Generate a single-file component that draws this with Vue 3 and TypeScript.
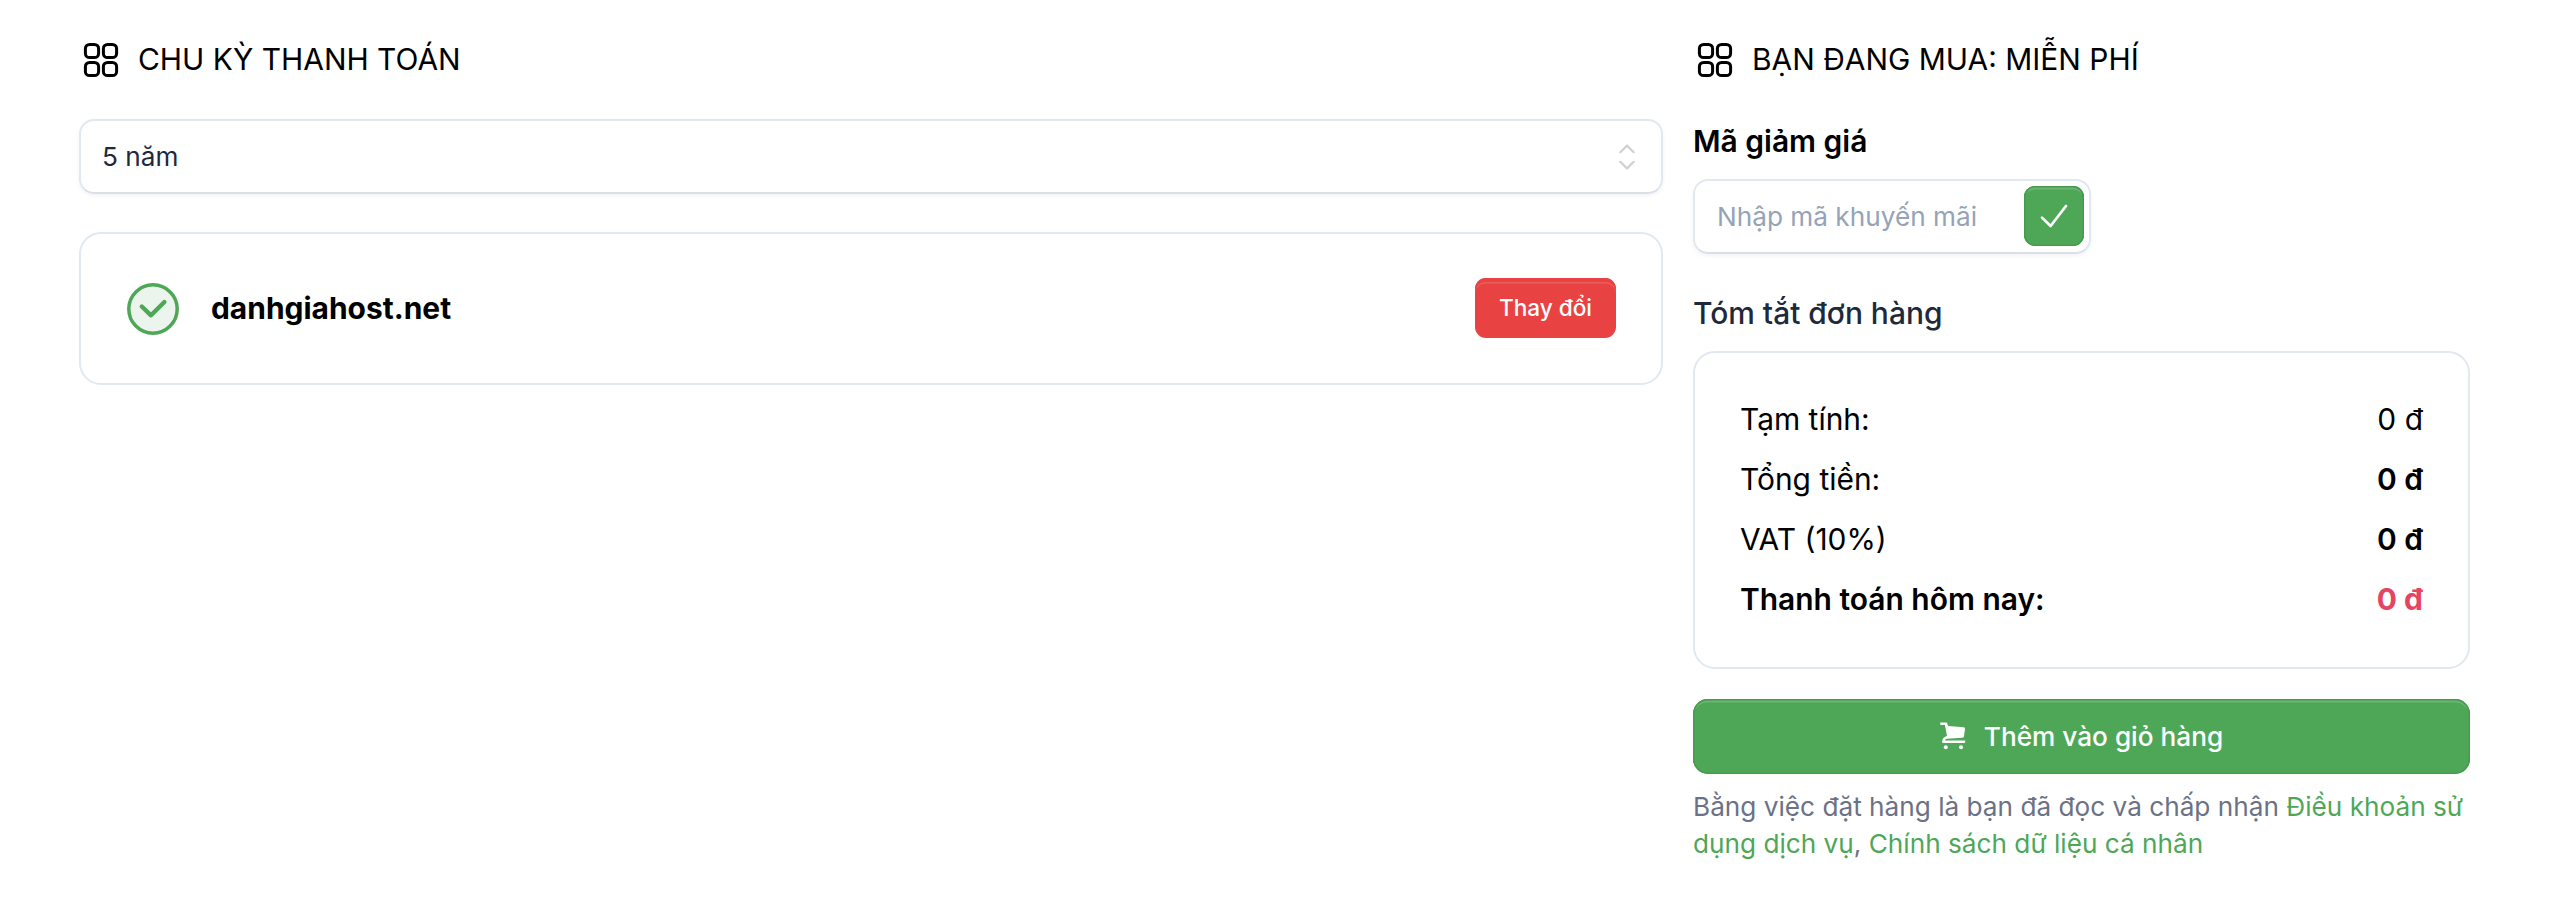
<script setup lang="ts">
interface SummaryRow {
  label: string
  value: string
  labelBold?: boolean
  valueBold?: boolean
  accent?: boolean
}

const rows: SummaryRow[] = [
  { label: 'Tạm tính:', value: '0 đ' },
  { label: 'Tổng tiền:', value: '0 đ', valueBold: true },
  { label: 'VAT (10%)', value: '0 đ', valueBold: true },
  { label: 'Thanh toán hôm nay:', value: '0 đ', labelBold: true, valueBold: true, accent: true },
]
</script>

<template>
  <main class="checkout">
    <section class="cycle">
      <h2 class="heading">
        <svg class="grid-icon" viewBox="0 0 36 36">
          <rect x="2.4" y="2.4" width="13.2" height="13.2" rx="4.2" />
          <rect x="20.4" y="2.4" width="13.2" height="13.2" rx="4.2" />
          <rect x="2.4" y="20.4" width="13.2" height="13.2" rx="4.2" />
          <rect x="20.4" y="20.4" width="13.2" height="13.2" rx="4.2" />
        </svg>
        <span>CHU KỲ THANH TOÁN</span>
      </h2>
      <div class="select">
        <span>5 năm</span>
        <svg class="updown" viewBox="0 0 16 26">
          <path d="M1.3 8.2 8 1.6l6.7 6.6M1.3 17.8 8 24.4l6.7-6.6" />
        </svg>
      </div>
      <div class="domain">
        <svg class="ok" viewBox="0 0 52 52">
          <circle cx="26" cy="26" r="24.2" />
          <path d="M14.8 23.5 24 32.300 37.400 19" />
        </svg>
        <span class="name">danhgiahost.net</span>
        <button class="change">Thay đổi</button>
      </div>
    </section>

    <section class="order">
      <h2 class="heading">
        <svg class="grid-icon" viewBox="0 0 36 36">
          <rect x="2.4" y="2.4" width="13.2" height="13.2" rx="4.2" />
          <rect x="20.4" y="2.4" width="13.2" height="13.2" rx="4.2" />
          <rect x="2.4" y="20.4" width="13.2" height="13.2" rx="4.2" />
          <rect x="20.4" y="20.4" width="13.2" height="13.2" rx="4.2" />
        </svg>
        <span>BẠN ĐANG MUA: MIỄN PHÍ</span>
      </h2>
      <h3 class="label">Mã giảm giá</h3>
      <div class="coupon">
        <span class="placeholder">Nhập mã khuyến mãi</span>
        <button class="apply">
          <svg viewBox="0 0 28 24"><path d="M2 13.6 10.6 22 26 2" /></svg>
        </button>
      </div>
      <h3 class="subtitle">Tóm tắt đơn hàng</h3>
      <div class="summary">
        <div v-for="row in rows" :key="row.label" class="row">
          <span :class="{ bold: row.labelBold }">{{ row.label }}</span>
          <span :class="{ bold: row.valueBold, accent: row.accent }">{{ row.value }}</span>
        </div>
      </div>
      <button class="add">
        <svg class="cart" viewBox="0 0 26 28">
          <path d="M.5.6h5.200c.9 0 1.600.4 1.800 1.300l.6 2 15.600 1.300c.9.1 1.400.8 1.300 1.700l-1 7.300c-.1.9-.8 1.400-1.700 1.500L7 16.700c-1.300.3-1.900 1-2.200 1.900h19.500c.6 0 1 .5 1 1.100s-.4 1.200-1 1.200H2.900c-.6 0-.9-.5-.8-1.100.2-2 1-3.700 2.700-4.700L7 13.700 4.900 2.900H1.200C.7 2.900.3 2.500.2 1.900S.200.6.5.6z" />
          <circle cx="5.800" cy="25.200" r="2" />
          <circle cx="21" cy="25.200" r="2" />
        </svg>
        <span>Thêm vào giỏ hàng</span>
      </button>
      <p class="terms">
        Bằng việc đặt hàng là bạn đã đọc và chấp nhận <a>Điều khoản sử dụng dịch vụ</a>, <a>Chính sách dữ liệu cá nhân</a>
      </p>
    </section>
  </main>
</template>

<style>
body {
  margin: 0;
  background: #fff;
}
</style>

<style scoped>
.checkout {
  display: flex;
  align-items: flex-start;
  gap: 30px;
  box-sizing: border-box;
  width: 2560px;
  height: 906px;
  padding: 30px 90px 0 79px;
  overflow: hidden;
  background: #fff;
  color: #000;
  font-family: Inter, "Liberation Sans", sans-serif;
  font-size: 29.95px;
}

.checkout * {
  box-sizing: border-box;
}

button {
  display: flex;
  align-items: center;
  justify-content: center;
  margin: 0;
  padding: 0;
  border: 0;
  color: #fff;
  font-family: inherit;
  font-weight: 500;
}

h2,
h3,
p {
  margin: 0;
  font-weight: 400;
}

.cycle {
  width: 1584px;
}

.order {
  flex: 1;
  min-width: 0;
}

.heading {
  display: flex;
  align-items: center;
  gap: 19px;
  height: 59px;
  padding-left: 4px;
  font-size: 29.95px;
}

.heading span {
  padding-bottom: 2px;
}

.grid-icon {
  width: 36px;
  height: 36px;
  fill: none;
  stroke: #000;
  stroke-width: 3;
}

.select {
  display: flex;
  align-items: center;
  justify-content: space-between;
  height: 75px;
  margin-top: 30px;
  padding: 0 26px 0 21px;
  border: 2px solid #e2e8f0;
  border-bottom-color: #d9e0ea;
  border-radius: 15px;
  box-shadow: 0 2px 4px rgba(0, 0, 0, 0.05);
  color: #1e293b;
  font-size: 26.2px;
}

.updown {
  width: 16px;
  height: 26px;
  fill: none;
  stroke: #d0d0d0;
  stroke-width: 2.2;
  stroke-linecap: round;
  stroke-linejoin: round;
}

.domain {
  display: flex;
  align-items: center;
  height: 153px;
  margin-top: 38px;
  padding: 0 45px 0 46px;
  border: 2px solid #e2e8f0;
  border-radius: 22px;
}

.ok {
  width: 52px;
  height: 52px;
  fill: #ecf5ed;
  stroke: #4ea757;
  stroke-width: 3.5;
  stroke-linecap: round;
  stroke-linejoin: round;
}

.ok path {
  fill: none;
  stroke-width: 4.4;
}

.name {
  flex: 1;
  margin-left: 32px;
  padding-bottom: 2px;
  font-weight: 700;
}

.change {
  width: 141px;
  height: 60px;
  margin-bottom: 1px;
  padding-bottom: 1px;
  border-radius: 11px;
  background: #e84342;
  box-shadow: inset 0 4px 0 #e84342, inset 0 5.500px 0 rgba(255, 255, 255, 0.14);
  font-size: 22.6px;
}

.label {
  height: 60px;
  margin-top: 22px;
  font-weight: 600;
  font-size: 29.95px;
  line-height: 60px;
}

.coupon {
  display: flex;
  align-items: center;
  justify-content: space-between;
  width: 398px;
  height: 75px;
  margin-top: 8px;
  padding: 0 5px 0 22px;
  border: 2px solid #e2e8f0;
  border-bottom-color: #d9e0ea;
  border-radius: 15px;
  box-shadow: 0 2px 4px rgba(0, 0, 0, 0.05);
  color: #94a3b8;
  font-size: 26.2px;
}

.apply {
  width: 60px;
  height: 60px;
  margin-bottom: 1px;
  border-radius: 11px;
  background: #4ea757;
  box-shadow: inset 0 0 0 1.500px #48994f, inset 0 3.500px 0 #6bb573;
}

.apply svg {
  width: 28px;
  height: 24px;
  fill: none;
  stroke: #fff;
  stroke-width: 2.7;
  stroke-linecap: round;
  stroke-linejoin: round;
}

.subtitle {
  height: 60px;
  margin-top: 29px;
  color: #1e293b;
  font-weight: 500;
  font-size: 29.95px;
  line-height: 60px;
}

.summary {
  height: 318px;
  margin-top: 8px;
  padding: 37px 45px 0;
  border: 2px solid #e2e8f0;
  border-radius: 22px;
}

.row {
  display: flex;
  justify-content: space-between;
  height: 59.9px;
  line-height: 59.9px;
}

.bold {
  font-weight: 600;
}

.accent {
  color: #e64463;
  font-weight: 700;
}

.add {
  gap: 18px;
  width: 100%;
  height: 75px;
  margin-top: 30px;
  padding-bottom: 1px;
  border-radius: 15px;
  background: #4ea757;
  box-shadow: inset 0 0 0 1.500px #48994f, inset 0 3.500px 0 #6bb573;
  font-size: 26.2px;
}

.cart {
  width: 26px;
  height: 28px;
  fill: #fff;
}

.terms {
  margin-top: 14px;
  color: #6b7285;
  font-size: 26.2px;
  line-height: 37.44px;
}

.terms a {
  color: #4ea757;
}
</style>
